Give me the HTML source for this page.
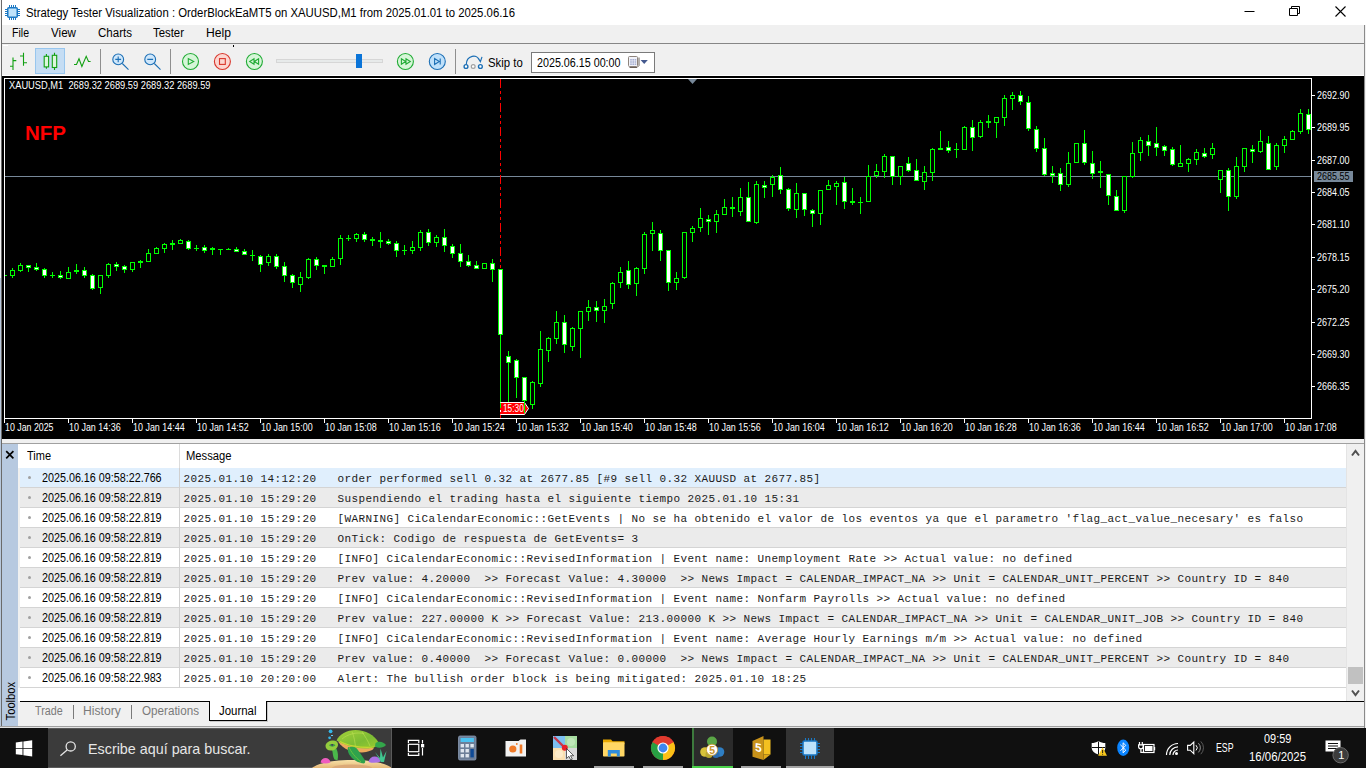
<!DOCTYPE html>
<html lang="en"><head><meta charset="utf-8"><title>Strategy Tester Visualization</title>
<style>
html,body{margin:0;padding:0}
body{width:1366px;height:768px;position:relative;overflow:hidden;background:#f0f0f0;font-family:"Liberation Sans",sans-serif}
.r{position:absolute;display:block}
.t{position:absolute;white-space:pre;line-height:1;transform-origin:0 50%;color:#000}
.m{font-family:"Liberation Mono",monospace;color:#1a1a1a}
</style></head><body>
<div class="r" style="left:0px;top:0px;width:1366px;height:25px;background:#fff;"></div>
<div class="r" style="left:0px;top:25px;width:1366px;height:18px;background:#f0f0f0;"></div>
<div class="r" style="left:0px;top:43px;width:1366px;height:1px;background:#868686;"></div>
<div class="r" style="left:0px;top:44px;width:1366px;height:32px;background:#f0f0f0;"></div>
<div class="r" style="left:2px;top:75px;width:1362px;height:1px;background:#fff;"></div>
<div class="r" style="left:3px;top:45px;width:5px;height:1px;background:#fff;"></div>
<svg class="r" style="left:4px;top:4px" width="17" height="17" viewBox="0 0 17 17">
<g stroke="#1b78c4" stroke-width="1" fill="none">
<path d="M5.5 1v3M7.5 1v3M9.5 1v3M11.5 1v3M5.5 13v3M7.5 13v3M9.5 13v3M11.5 13v3M1 5.5h3M1 7.5h3M1 9.5h3M1 11.5h3M13 5.5h3M13 7.5h3M13 9.5h3M13 11.5h3"/>
</g><rect x="3.75" y="3.75" width="9.5" height="9.5" rx="1" fill="#bfe3fb" stroke="#1b78c4" stroke-width="1.5"/></svg>
<span class="t" style="left:26.00px;top:6.84px;font-size:12px;transform:scaleX(0.9455);">Strategy Tester Visualization : OrderBlockEaMT5 on XAUUSD,M1 from 2025.01.01 to 2025.06.16</span>
<svg class="r" style="left:1230px;top:0" width="136" height="25" viewBox="0 0 136 25" fill="none" stroke="#000" stroke-width="1">
<path d="M14.5 11.5h10"/>
<path d="M59.5 8.5h8v7h-8z M61.5 8.5v-2h8v7h-2"/>
<path d="M105.5 6.5l10 10M115.5 6.5l-10 10" stroke-width="1.1"/></svg>
<span class="t" style="left:11.50px;top:26.84px;font-size:12px;transform:scaleX(0.8788);">File</span>
<span class="t" style="left:51.00px;top:26.84px;font-size:12px;transform:scaleX(0.9691);">View</span>
<span class="t" style="left:98.00px;top:26.84px;font-size:12px;transform:scaleX(0.9620);">Charts</span>
<span class="t" style="left:153.00px;top:26.84px;font-size:12px;transform:scaleX(0.9484);">Tester</span>
<span class="t" style="left:206.00px;top:26.84px;font-size:12px;transform:scaleX(1.0127);">Help</span>
<div class="r" style="left:0px;top:0px;width:1px;height:278px;background:#f6f6f6;"></div>
<div class="r" style="left:0px;top:278px;width:1px;height:449px;background:#b8c8dc;"></div>
<div class="r" style="left:1px;top:0px;width:1px;height:727px;background:#6a6a6a;"></div>
<div class="r" style="left:35px;top:48px;width:30px;height:26px;background:#c5ddf4;box-sizing:border-box;border:1px solid #98c6ee;"></div>
<svg class="r" style="left:0;top:44px" width="700" height="32" viewBox="0 44 700 32" fill="none">
<g stroke="#12a012" stroke-width="1.1">
<path d="M13 57.5V70M10 66.2h3M13 60.6h3.3M23.5 52.7V65.7M20 56h3.5M23.5 62.8H27"/>
<path d="M46.4 54v2.3M46.4 67v1.8M54.5 52.7v2.6M54.5 67.5V70"/>
<rect x="44.2" y="56.3" width="4.4" height="10.6" fill="#dcf7dc"/>
<rect x="52.3" y="55.3" width="4.4" height="12.2" fill="#dcf7dc"/>
<path d="M74 64.5h2.5l2.5-5.7 2.9 7.7 4.3-10.2 2.3 5.2h2.1"/>
</g>
<path d="M100.5 49v25M170.5 49v25M455.5 49v25" stroke="#8e8e8e" stroke-width="1"/>
<g stroke="#1c6fb5" stroke-width="1.1">
<circle cx="118.2" cy="59.4" r="5.4" fill="#cfe7fb"/><path d="M122.3 63.5l6.2 6.2M115.3 59.4h5.8M118.2 56.5v5.8"/>
<circle cx="150.2" cy="59.4" r="5.4" fill="#cfe7fb"/><path d="M154.3 63.5l6.2 6.2M147.3 59.4h5.8"/>
</g>
<g stroke="#21ab35" stroke-width="1.1">
<circle cx="190.5" cy="61.5" r="8" fill="#d6f6d8"/><path d="M188.3 58.6v5.8l5.4-2.9z"/>
<circle cx="254.4" cy="61.5" r="8" fill="#d6f6d8"/><path d="M254 58.8v5.4l-4.3-2.7zM258.6 58.8v5.4l-4.3-2.7z"/>
<circle cx="405.4" cy="61.5" r="8" fill="#d6f6d8"/><path d="M401.4 58.8v5.4l4.3-2.7zM406 58.8v5.4l4.3-2.7z"/>
</g>
<g stroke="#d9362b" stroke-width="1.1"><circle cx="222.4" cy="61.5" r="8" fill="#fbd6d1"/><rect x="219.5" y="58.6" width="5.8" height="5.8"/></g>
<g stroke="#1c6fb5" stroke-width="1.1"><circle cx="437.3" cy="61.5" r="8" fill="#bfe0fa"/><path d="M434.6 58.6v5.8l4.7-2.9zM440.2 58.4v6.2"/></g>
<rect x="233" y="45" width="1" height="2" fill="#000"/>
<rect x="276.5" y="59.5" width="106" height="3" fill="#e7eaea" stroke="#d6d6d6"/>
<rect x="356" y="54" width="6" height="14" fill="#0a74d8"/>
<g stroke="#1c6fb5" stroke-width="1.2">
<path d="M466.3 64.6c0-9 11-12 13.8-3.2M477.6 57.5l2.8 4.2 1.6-4.8"/>
<circle cx="466" cy="66.5" r="1.9" fill="#fff" stroke-width="1.4"/><circle cx="480.4" cy="66.5" r="1.9" fill="#fff" stroke-width="1.4"/>
<circle cx="473.2" cy="66.5" r="1.9" fill="#fff" stroke="#a0a0a0"/></g>
<rect x="531.5" y="52.5" width="123" height="20" fill="#fff" stroke="#7a7a7a"/>
<path d="M629.500 67.500h7.500l2-2v-8" stroke="#6b6058" stroke-width="1" fill="none"/>
<rect x="628.500" y="56.500" width="9" height="10" rx="1" fill="#f2f3fa" stroke="#8e847c"/>
<g fill="#a9b1d3"><rect x="630.200" y="59" width="1.600" height="1.600"/><rect x="632.400" y="59" width="1.600" height="1.600"/><rect x="634.600" y="59" width="1.600" height="1.600"/>
<rect x="630.200" y="61.200" width="1.600" height="1.600"/><rect x="632.400" y="61.200" width="1.600" height="1.600"/><rect x="634.600" y="61.200" width="1.600" height="1.600"/>
<rect x="630.200" y="63.400" width="1.600" height="1.600"/><rect x="632.400" y="63.400" width="1.600" height="1.600"/><rect x="634.600" y="63.400" width="1.600" height="1.600"/></g>
<path d="M640.6 60h7.2l-3.6 4z" fill="#44598f"/>
</svg>
<span class="t" style="left:487.50px;top:56.84px;font-size:12px;transform:scaleX(0.9458);">Skip to</span>
<span class="t" style="left:536.50px;top:56.84px;font-size:12px;transform:scaleX(0.8938);">2025.06.15 00:00</span>
<div class="r" style="left:2px;top:76px;width:1362px;height:363px;background:#000;"></div>
<svg class="r" style="left:0;top:76px" width="1366" height="363" viewBox="0 76 1366 363" shape-rendering="crispEdges"><path d="M4.5 78.5H1311.5V418.5H4.5z" fill="none" stroke="#fff" stroke-width="1"/><rect x="5" y="176" width="1306" height="1" fill="#778899"/><rect x="4" y="419" width="1" height="4" fill="#fff"/><rect x="68" y="419" width="1" height="4" fill="#fff"/><rect x="132" y="419" width="1" height="4" fill="#fff"/><rect x="196" y="419" width="1" height="4" fill="#fff"/><rect x="260" y="419" width="1" height="4" fill="#fff"/><rect x="324" y="419" width="1" height="4" fill="#fff"/><rect x="388" y="419" width="1" height="4" fill="#fff"/><rect x="452" y="419" width="1" height="4" fill="#fff"/><rect x="516" y="419" width="1" height="4" fill="#fff"/><rect x="580" y="419" width="1" height="4" fill="#fff"/><rect x="644" y="419" width="1" height="4" fill="#fff"/><rect x="708" y="419" width="1" height="4" fill="#fff"/><rect x="772" y="419" width="1" height="4" fill="#fff"/><rect x="836" y="419" width="1" height="4" fill="#fff"/><rect x="900" y="419" width="1" height="4" fill="#fff"/><rect x="964" y="419" width="1" height="4" fill="#fff"/><rect x="1028" y="419" width="1" height="4" fill="#fff"/><rect x="1092" y="419" width="1" height="4" fill="#fff"/><rect x="1156" y="419" width="1" height="4" fill="#fff"/><rect x="1220" y="419" width="1" height="4" fill="#fff"/><rect x="1284" y="419" width="1" height="4" fill="#fff"/><rect x="1312" y="95" width="3" height="1" fill="#fff"/><rect x="1312" y="127" width="3" height="1" fill="#fff"/><rect x="1312" y="160" width="3" height="1" fill="#fff"/><rect x="1312" y="192" width="3" height="1" fill="#fff"/><rect x="1312" y="224" width="3" height="1" fill="#fff"/><rect x="1312" y="257" width="3" height="1" fill="#fff"/><rect x="1312" y="289" width="3" height="1" fill="#fff"/><rect x="1312" y="322" width="3" height="1" fill="#fff"/><rect x="1312" y="354" width="3" height="1" fill="#fff"/><rect x="1312" y="386" width="3" height="1" fill="#fff"/><rect x="500" y="79" width="1" height="9" fill="#f00"/><rect x="500" y="91" width="1" height="3" fill="#f00"/><rect x="500" y="97" width="1" height="3" fill="#f00"/><rect x="500" y="103" width="1" height="9" fill="#f00"/><rect x="500" y="115" width="1" height="3" fill="#f00"/><rect x="500" y="121" width="1" height="3" fill="#f00"/><rect x="500" y="127" width="1" height="9" fill="#f00"/><rect x="500" y="139" width="1" height="3" fill="#f00"/><rect x="500" y="145" width="1" height="3" fill="#f00"/><rect x="500" y="151" width="1" height="9" fill="#f00"/><rect x="500" y="163" width="1" height="3" fill="#f00"/><rect x="500" y="169" width="1" height="3" fill="#f00"/><rect x="500" y="175" width="1" height="9" fill="#f00"/><rect x="500" y="187" width="1" height="3" fill="#f00"/><rect x="500" y="193" width="1" height="3" fill="#f00"/><rect x="500" y="199" width="1" height="9" fill="#f00"/><rect x="500" y="211" width="1" height="3" fill="#f00"/><rect x="500" y="217" width="1" height="3" fill="#f00"/><rect x="500" y="223" width="1" height="9" fill="#f00"/><rect x="500" y="235" width="1" height="3" fill="#f00"/><rect x="500" y="241" width="1" height="3" fill="#f00"/><rect x="500" y="247" width="1" height="9" fill="#f00"/><rect x="500" y="259" width="1" height="3" fill="#f00"/><rect x="500" y="265" width="1" height="3" fill="#f00"/><path d="M688 79h9l-4.500 5z" fill="#778899" shape-rendering="auto"/><rect x="5" y="275" width="2" height="1" fill="#00ff00"/><rect x="12" y="268" width="1" height="2" fill="#00ff00"/><rect x="12" y="276" width="1" height="2" fill="#00ff00"/><rect x="10.5" y="270.5" width="4" height="5" fill="#000" stroke="#00ff00"/><rect x="20" y="263" width="1" height="2" fill="#00ff00"/><rect x="20" y="271" width="1" height="1" fill="#00ff00"/><rect x="18.5" y="265.5" width="4" height="5" fill="#000" stroke="#00ff00"/><rect x="28" y="265" width="1" height="7" fill="#00ff00"/><rect x="26.5" y="265.5" width="4" height="2" fill="#fff" stroke="#00ff00"/><rect x="36" y="263" width="1" height="8" fill="#00ff00"/><rect x="34.5" y="267.5" width="4" height="2" fill="#fff" stroke="#00ff00"/><rect x="44" y="268" width="1" height="10" fill="#00ff00"/><rect x="42.5" y="269.5" width="4" height="6" fill="#fff" stroke="#00ff00"/><rect x="52" y="272" width="1" height="6" fill="#00ff00"/><rect x="50" y="275" width="5" height="1" fill="#00ff00"/><rect x="60" y="271" width="1" height="8" fill="#00ff00"/><rect x="58.5" y="275.5" width="4" height="2" fill="#fff" stroke="#00ff00"/><rect x="68" y="267" width="1" height="5" fill="#00ff00"/><rect x="66.5" y="272.5" width="4" height="6" fill="#000" stroke="#00ff00"/><rect x="76" y="264" width="1" height="10" fill="#00ff00"/><rect x="74" y="270" width="5" height="2" fill="#00ff00"/><rect x="84" y="267" width="1" height="11" fill="#00ff00"/><rect x="82.5" y="270.5" width="4" height="5" fill="#fff" stroke="#00ff00"/><rect x="92" y="274" width="1" height="16" fill="#00ff00"/><rect x="90.5" y="275.5" width="4" height="13" fill="#fff" stroke="#00ff00"/><rect x="100" y="288" width="1" height="6" fill="#00ff00"/><rect x="98.5" y="275.5" width="4" height="12" fill="#000" stroke="#00ff00"/><rect x="108" y="263" width="1" height="1" fill="#00ff00"/><rect x="108" y="276" width="1" height="2" fill="#00ff00"/><rect x="106.5" y="264.5" width="4" height="11" fill="#000" stroke="#00ff00"/><rect x="116" y="262" width="1" height="9" fill="#00ff00"/><rect x="114.5" y="264.5" width="4" height="2" fill="#fff" stroke="#00ff00"/><rect x="124" y="265" width="1" height="8" fill="#00ff00"/><rect x="122.5" y="266.5" width="4" height="3" fill="#fff" stroke="#00ff00"/><rect x="132" y="270" width="1" height="2" fill="#00ff00"/><rect x="130.5" y="262.5" width="4" height="7" fill="#000" stroke="#00ff00"/><rect x="140" y="260" width="1" height="8" fill="#00ff00"/><rect x="138" y="261" width="5" height="2" fill="#00ff00"/><rect x="148" y="249" width="1" height="4" fill="#00ff00"/><rect x="146.5" y="253.5" width="4" height="8" fill="#000" stroke="#00ff00"/><rect x="156" y="247" width="1" height="1" fill="#00ff00"/><rect x="154.5" y="248.5" width="4" height="5" fill="#000" stroke="#00ff00"/><rect x="164" y="243" width="1" height="1" fill="#00ff00"/><rect x="164" y="249" width="1" height="4" fill="#00ff00"/><rect x="162.5" y="244.5" width="4" height="4" fill="#000" stroke="#00ff00"/><rect x="172" y="240" width="1" height="10" fill="#00ff00"/><rect x="170" y="243" width="5" height="2" fill="#00ff00"/><rect x="180" y="239" width="1" height="1" fill="#00ff00"/><rect x="178.5" y="240.5" width="4" height="3" fill="#000" stroke="#00ff00"/><rect x="188" y="240" width="1" height="10" fill="#00ff00"/><rect x="186.5" y="241.5" width="4" height="7" fill="#fff" stroke="#00ff00"/><rect x="196" y="245" width="1" height="6" fill="#00ff00"/><rect x="194" y="248" width="5" height="1" fill="#00ff00"/><rect x="204" y="245" width="1" height="8" fill="#00ff00"/><rect x="202.5" y="247.5" width="4" height="3" fill="#fff" stroke="#00ff00"/><rect x="212" y="247" width="1" height="8" fill="#00ff00"/><rect x="210" y="248" width="5" height="2" fill="#00ff00"/><rect x="220" y="249" width="1" height="6" fill="#00ff00"/><rect x="218" y="249" width="5" height="1" fill="#00ff00"/><rect x="228" y="248" width="1" height="2" fill="#00ff00"/><rect x="226" y="249" width="5" height="1" fill="#00ff00"/><rect x="236" y="247" width="1" height="5" fill="#00ff00"/><rect x="234.5" y="249.5" width="4" height="2" fill="#fff" stroke="#00ff00"/><rect x="244" y="249" width="1" height="6" fill="#00ff00"/><rect x="242.5" y="251.5" width="4" height="3" fill="#fff" stroke="#00ff00"/><rect x="252" y="250" width="1" height="11" fill="#00ff00"/><rect x="250" y="255" width="5" height="1" fill="#00ff00"/><rect x="260" y="255" width="1" height="17" fill="#00ff00"/><rect x="258.5" y="256.5" width="4" height="8" fill="#fff" stroke="#00ff00"/><rect x="268" y="254" width="1" height="2" fill="#00ff00"/><rect x="268" y="263" width="1" height="3" fill="#00ff00"/><rect x="266.5" y="256.5" width="4" height="6" fill="#000" stroke="#00ff00"/><rect x="276" y="254" width="1" height="15" fill="#00ff00"/><rect x="274.5" y="256.5" width="4" height="10" fill="#fff" stroke="#00ff00"/><rect x="284" y="262" width="1" height="20" fill="#00ff00"/><rect x="282.5" y="266.5" width="4" height="9" fill="#fff" stroke="#00ff00"/><rect x="292" y="274" width="1" height="14" fill="#00ff00"/><rect x="290.5" y="275.5" width="4" height="7" fill="#fff" stroke="#00ff00"/><rect x="300" y="272" width="1" height="5" fill="#00ff00"/><rect x="300" y="285" width="1" height="7" fill="#00ff00"/><rect x="298.5" y="277.5" width="4" height="7" fill="#000" stroke="#00ff00"/><rect x="308" y="258" width="1" height="1" fill="#00ff00"/><rect x="308" y="278" width="1" height="1" fill="#00ff00"/><rect x="306.5" y="259.5" width="4" height="18" fill="#000" stroke="#00ff00"/><rect x="316" y="257" width="1" height="13" fill="#00ff00"/><rect x="314.5" y="259.5" width="4" height="6" fill="#fff" stroke="#00ff00"/><rect x="324" y="265" width="1" height="9" fill="#00ff00"/><rect x="322" y="265" width="5" height="2" fill="#00ff00"/><rect x="332" y="257" width="1" height="2" fill="#00ff00"/><rect x="330.5" y="259.5" width="4" height="7" fill="#000" stroke="#00ff00"/><rect x="340" y="235" width="1" height="3" fill="#00ff00"/><rect x="340" y="259" width="1" height="6" fill="#00ff00"/><rect x="338.5" y="238.5" width="4" height="20" fill="#000" stroke="#00ff00"/><rect x="348" y="235" width="1" height="6" fill="#00ff00"/><rect x="346" y="238" width="5" height="1" fill="#00ff00"/><rect x="356" y="233" width="1" height="1" fill="#00ff00"/><rect x="356" y="239" width="1" height="3" fill="#00ff00"/><rect x="354.5" y="234.5" width="4" height="4" fill="#000" stroke="#00ff00"/><rect x="364" y="232" width="1" height="10" fill="#00ff00"/><rect x="362.5" y="234.5" width="4" height="5" fill="#fff" stroke="#00ff00"/><rect x="372" y="237" width="1" height="9" fill="#00ff00"/><rect x="370" y="239" width="5" height="2" fill="#00ff00"/><rect x="380" y="232" width="1" height="16" fill="#00ff00"/><rect x="378" y="240" width="5" height="2" fill="#00ff00"/><rect x="388" y="239" width="1" height="6" fill="#00ff00"/><rect x="386.5" y="241.5" width="4" height="2" fill="#fff" stroke="#00ff00"/><rect x="396" y="241" width="1" height="16" fill="#00ff00"/><rect x="394.5" y="243.5" width="4" height="7" fill="#fff" stroke="#00ff00"/><rect x="404" y="245" width="1" height="10" fill="#00ff00"/><rect x="402" y="250" width="5" height="1" fill="#00ff00"/><rect x="412" y="241" width="1" height="6" fill="#00ff00"/><rect x="412" y="251" width="1" height="3" fill="#00ff00"/><rect x="410.5" y="247.5" width="4" height="3" fill="#000" stroke="#00ff00"/><rect x="420" y="230" width="1" height="2" fill="#00ff00"/><rect x="420" y="248" width="1" height="3" fill="#00ff00"/><rect x="418.5" y="232.5" width="4" height="15" fill="#000" stroke="#00ff00"/><rect x="428" y="229" width="1" height="17" fill="#00ff00"/><rect x="426.5" y="232.5" width="4" height="10" fill="#fff" stroke="#00ff00"/><rect x="436" y="235" width="1" height="2" fill="#00ff00"/><rect x="436" y="243" width="1" height="4" fill="#00ff00"/><rect x="434.5" y="237.5" width="4" height="5" fill="#000" stroke="#00ff00"/><rect x="444" y="229" width="1" height="23" fill="#00ff00"/><rect x="442.5" y="237.5" width="4" height="8" fill="#fff" stroke="#00ff00"/><rect x="452" y="244" width="1" height="14" fill="#00ff00"/><rect x="450.5" y="246.5" width="4" height="7" fill="#fff" stroke="#00ff00"/><rect x="460" y="244" width="1" height="23" fill="#00ff00"/><rect x="458.5" y="253.5" width="4" height="8" fill="#fff" stroke="#00ff00"/><rect x="468" y="255" width="1" height="12" fill="#00ff00"/><rect x="466.5" y="261.5" width="4" height="4" fill="#fff" stroke="#00ff00"/><rect x="476" y="261" width="1" height="8" fill="#00ff00"/><rect x="474.5" y="265.5" width="4" height="3" fill="#fff" stroke="#00ff00"/><rect x="482.5" y="263.5" width="4" height="5" fill="#000" stroke="#00ff00"/><rect x="492" y="259" width="1" height="23" fill="#00ff00"/><rect x="490.5" y="263.5" width="4" height="6" fill="#fff" stroke="#00ff00"/><rect x="500" y="269" width="1" height="140" fill="#00ff00"/><rect x="498.5" y="269.5" width="4" height="65" fill="#fff" stroke="#00ff00"/><rect x="508" y="351" width="1" height="52" fill="#00ff00"/><rect x="506.5" y="356.5" width="4" height="6" fill="#fff" stroke="#00ff00"/><rect x="516" y="359" width="1" height="39" fill="#00ff00"/><rect x="514.5" y="360.5" width="4" height="17" fill="#fff" stroke="#00ff00"/><rect x="524" y="377" width="1" height="36" fill="#00ff00"/><rect x="522.5" y="377.5" width="4" height="23" fill="#fff" stroke="#00ff00"/><rect x="532" y="381" width="1" height="1" fill="#00ff00"/><rect x="532" y="405" width="1" height="4" fill="#00ff00"/><rect x="530.5" y="382.5" width="4" height="22" fill="#000" stroke="#00ff00"/><rect x="540" y="331" width="1" height="18" fill="#00ff00"/><rect x="540" y="384" width="1" height="3" fill="#00ff00"/><rect x="538.5" y="349.5" width="4" height="34" fill="#000" stroke="#00ff00"/><rect x="548" y="337" width="1" height="1" fill="#00ff00"/><rect x="548" y="351" width="1" height="11" fill="#00ff00"/><rect x="546.5" y="338.5" width="4" height="12" fill="#000" stroke="#00ff00"/><rect x="556" y="311" width="1" height="11" fill="#00ff00"/><rect x="556" y="339" width="1" height="5" fill="#00ff00"/><rect x="554.5" y="322.5" width="4" height="16" fill="#000" stroke="#00ff00"/><rect x="564" y="315" width="1" height="38" fill="#00ff00"/><rect x="562.5" y="322.5" width="4" height="22" fill="#fff" stroke="#00ff00"/><rect x="572" y="327" width="1" height="1" fill="#00ff00"/><rect x="572" y="347" width="1" height="4" fill="#00ff00"/><rect x="570.5" y="328.5" width="4" height="18" fill="#000" stroke="#00ff00"/><rect x="580" y="329" width="1" height="29" fill="#00ff00"/><rect x="578.5" y="311.5" width="4" height="17" fill="#000" stroke="#00ff00"/><rect x="588" y="300" width="1" height="7" fill="#00ff00"/><rect x="588" y="312" width="1" height="9" fill="#00ff00"/><rect x="586.5" y="307.5" width="4" height="4" fill="#000" stroke="#00ff00"/><rect x="596" y="301" width="1" height="21" fill="#00ff00"/><rect x="594.5" y="307.5" width="4" height="3" fill="#fff" stroke="#00ff00"/><rect x="604" y="299" width="1" height="7" fill="#00ff00"/><rect x="604" y="311" width="1" height="12" fill="#00ff00"/><rect x="602.5" y="306.5" width="4" height="4" fill="#000" stroke="#00ff00"/><rect x="612" y="282" width="1" height="1" fill="#00ff00"/><rect x="612" y="304" width="1" height="5" fill="#00ff00"/><rect x="610.5" y="283.5" width="4" height="20" fill="#000" stroke="#00ff00"/><rect x="620" y="267" width="1" height="5" fill="#00ff00"/><rect x="620" y="283" width="1" height="5" fill="#00ff00"/><rect x="618.5" y="272.5" width="4" height="10" fill="#000" stroke="#00ff00"/><rect x="628" y="261" width="1" height="28" fill="#00ff00"/><rect x="626.5" y="270.5" width="4" height="14" fill="#fff" stroke="#00ff00"/><rect x="636" y="267" width="1" height="1" fill="#00ff00"/><rect x="636" y="284" width="1" height="12" fill="#00ff00"/><rect x="634.5" y="268.5" width="4" height="15" fill="#000" stroke="#00ff00"/><rect x="644" y="232" width="1" height="2" fill="#00ff00"/><rect x="644" y="269" width="1" height="5" fill="#00ff00"/><rect x="642.5" y="234.5" width="4" height="34" fill="#000" stroke="#00ff00"/><rect x="652" y="222" width="1" height="8" fill="#00ff00"/><rect x="652" y="234" width="1" height="17" fill="#00ff00"/><rect x="650.5" y="230.5" width="4" height="3" fill="#000" stroke="#00ff00"/><rect x="660" y="230" width="1" height="31" fill="#00ff00"/><rect x="658.5" y="233.5" width="4" height="17" fill="#fff" stroke="#00ff00"/><rect x="668" y="250" width="1" height="41" fill="#00ff00"/><rect x="666.5" y="250.5" width="4" height="32" fill="#fff" stroke="#00ff00"/><rect x="676" y="272" width="1" height="6" fill="#00ff00"/><rect x="676" y="283" width="1" height="7" fill="#00ff00"/><rect x="674.5" y="278.5" width="4" height="4" fill="#000" stroke="#00ff00"/><rect x="684" y="278" width="1" height="1" fill="#00ff00"/><rect x="682.5" y="232.5" width="4" height="45" fill="#000" stroke="#00ff00"/><rect x="692" y="226" width="1" height="2" fill="#00ff00"/><rect x="692" y="233" width="1" height="9" fill="#00ff00"/><rect x="690.5" y="228.5" width="4" height="4" fill="#000" stroke="#00ff00"/><rect x="700" y="208" width="1" height="10" fill="#00ff00"/><rect x="700" y="228" width="1" height="4" fill="#00ff00"/><rect x="698.5" y="218.5" width="4" height="9" fill="#000" stroke="#00ff00"/><rect x="708" y="215" width="1" height="20" fill="#00ff00"/><rect x="706.5" y="219.5" width="4" height="2" fill="#fff" stroke="#00ff00"/><rect x="716" y="210" width="1" height="4" fill="#00ff00"/><rect x="716" y="222" width="1" height="11" fill="#00ff00"/><rect x="714.5" y="214.5" width="4" height="7" fill="#000" stroke="#00ff00"/><rect x="724" y="199" width="1" height="8" fill="#00ff00"/><rect x="722.5" y="207.5" width="4" height="7" fill="#000" stroke="#00ff00"/><rect x="732" y="197" width="1" height="20" fill="#00ff00"/><rect x="730" y="207" width="5" height="2" fill="#00ff00"/><rect x="740" y="188" width="1" height="9" fill="#00ff00"/><rect x="740" y="212" width="1" height="4" fill="#00ff00"/><rect x="738.5" y="197.5" width="4" height="14" fill="#000" stroke="#00ff00"/><rect x="748" y="182" width="1" height="40" fill="#00ff00"/><rect x="746.5" y="197.5" width="4" height="24" fill="#fff" stroke="#00ff00"/><rect x="756" y="181" width="1" height="3" fill="#00ff00"/><rect x="756" y="223" width="1" height="1" fill="#00ff00"/><rect x="754.5" y="184.5" width="4" height="38" fill="#000" stroke="#00ff00"/><rect x="764" y="181" width="1" height="17" fill="#00ff00"/><rect x="762.5" y="185.5" width="4" height="2" fill="#fff" stroke="#00ff00"/><rect x="772" y="175" width="1" height="2" fill="#00ff00"/><rect x="772" y="185" width="1" height="12" fill="#00ff00"/><rect x="770.5" y="177.5" width="4" height="7" fill="#000" stroke="#00ff00"/><rect x="780" y="167" width="1" height="27" fill="#00ff00"/><rect x="778.5" y="175.5" width="4" height="14" fill="#fff" stroke="#00ff00"/><rect x="788" y="188" width="1" height="23" fill="#00ff00"/><rect x="786.5" y="189.5" width="4" height="19" fill="#fff" stroke="#00ff00"/><rect x="796" y="183" width="1" height="10" fill="#00ff00"/><rect x="796" y="210" width="1" height="8" fill="#00ff00"/><rect x="794.5" y="193.5" width="4" height="16" fill="#000" stroke="#00ff00"/><rect x="804" y="193" width="1" height="23" fill="#00ff00"/><rect x="802.5" y="193.5" width="4" height="16" fill="#fff" stroke="#00ff00"/><rect x="812" y="209" width="1" height="18" fill="#00ff00"/><rect x="810.5" y="210.5" width="4" height="3" fill="#fff" stroke="#00ff00"/><rect x="820" y="214" width="1" height="11" fill="#00ff00"/><rect x="818.5" y="190.5" width="4" height="23" fill="#000" stroke="#00ff00"/><rect x="828" y="180" width="1" height="5" fill="#00ff00"/><rect x="826.5" y="185.5" width="4" height="4" fill="#000" stroke="#00ff00"/><rect x="836" y="181" width="1" height="2" fill="#00ff00"/><rect x="836" y="187" width="1" height="18" fill="#00ff00"/><rect x="834.5" y="183.5" width="4" height="3" fill="#000" stroke="#00ff00"/><rect x="844" y="177" width="1" height="32" fill="#00ff00"/><rect x="842.5" y="182.5" width="4" height="19" fill="#fff" stroke="#00ff00"/><rect x="852" y="188" width="1" height="17" fill="#00ff00"/><rect x="850" y="201" width="5" height="2" fill="#00ff00"/><rect x="860" y="197" width="1" height="17" fill="#00ff00"/><rect x="858" y="202" width="5" height="1" fill="#00ff00"/><rect x="868" y="165" width="1" height="11" fill="#00ff00"/><rect x="866.5" y="176.5" width="4" height="25" fill="#000" stroke="#00ff00"/><rect x="876" y="164" width="1" height="7" fill="#00ff00"/><rect x="876" y="176" width="1" height="2" fill="#00ff00"/><rect x="874.5" y="171.5" width="4" height="4" fill="#000" stroke="#00ff00"/><rect x="884" y="154" width="1" height="2" fill="#00ff00"/><rect x="884" y="172" width="1" height="6" fill="#00ff00"/><rect x="882.5" y="156.5" width="4" height="15" fill="#000" stroke="#00ff00"/><rect x="892" y="156" width="1" height="29" fill="#00ff00"/><rect x="890.5" y="156.5" width="4" height="20" fill="#fff" stroke="#00ff00"/><rect x="900" y="177" width="1" height="8" fill="#00ff00"/><rect x="898.5" y="166.5" width="4" height="10" fill="#000" stroke="#00ff00"/><rect x="908" y="157" width="1" height="15" fill="#00ff00"/><rect x="906.5" y="163.5" width="4" height="7" fill="#fff" stroke="#00ff00"/><rect x="916" y="159" width="1" height="22" fill="#00ff00"/><rect x="914.5" y="170.5" width="4" height="10" fill="#fff" stroke="#00ff00"/><rect x="924" y="166" width="1" height="6" fill="#00ff00"/><rect x="924" y="182" width="1" height="8" fill="#00ff00"/><rect x="922.5" y="172.5" width="4" height="9" fill="#000" stroke="#00ff00"/><rect x="932" y="148" width="1" height="1" fill="#00ff00"/><rect x="932" y="173" width="1" height="8" fill="#00ff00"/><rect x="930.5" y="149.5" width="4" height="23" fill="#000" stroke="#00ff00"/><rect x="940" y="131" width="1" height="19" fill="#00ff00"/><rect x="938" y="148" width="5" height="2" fill="#00ff00"/><rect x="948" y="141" width="1" height="12" fill="#00ff00"/><rect x="946.5" y="147.5" width="4" height="3" fill="#fff" stroke="#00ff00"/><rect x="956" y="143" width="1" height="15" fill="#00ff00"/><rect x="954" y="149" width="5" height="1" fill="#00ff00"/><rect x="964" y="126" width="1" height="1" fill="#00ff00"/><rect x="962.5" y="127.5" width="4" height="22" fill="#000" stroke="#00ff00"/><rect x="972" y="120" width="1" height="31" fill="#00ff00"/><rect x="970.5" y="127.5" width="4" height="10" fill="#fff" stroke="#00ff00"/><rect x="980" y="120" width="1" height="2" fill="#00ff00"/><rect x="980" y="137" width="1" height="1" fill="#00ff00"/><rect x="978.5" y="122.5" width="4" height="14" fill="#000" stroke="#00ff00"/><rect x="988" y="115" width="1" height="13" fill="#00ff00"/><rect x="986" y="121" width="5" height="2" fill="#00ff00"/><rect x="996" y="123" width="1" height="15" fill="#00ff00"/><rect x="994.5" y="117.5" width="4" height="5" fill="#000" stroke="#00ff00"/><rect x="1004" y="95" width="1" height="3" fill="#00ff00"/><rect x="1004" y="118" width="1" height="8" fill="#00ff00"/><rect x="1002.5" y="98.5" width="4" height="19" fill="#000" stroke="#00ff00"/><rect x="1012" y="92" width="1" height="3" fill="#00ff00"/><rect x="1012" y="99" width="1" height="11" fill="#00ff00"/><rect x="1010.5" y="95.5" width="4" height="3" fill="#000" stroke="#00ff00"/><rect x="1020" y="91" width="1" height="14" fill="#00ff00"/><rect x="1018.5" y="95.5" width="4" height="6" fill="#fff" stroke="#00ff00"/><rect x="1028" y="96" width="1" height="35" fill="#00ff00"/><rect x="1026.5" y="102.5" width="4" height="26" fill="#fff" stroke="#00ff00"/><rect x="1036" y="126" width="1" height="26" fill="#00ff00"/><rect x="1034.5" y="129.5" width="4" height="19" fill="#fff" stroke="#00ff00"/><rect x="1044" y="138" width="1" height="38" fill="#00ff00"/><rect x="1042.5" y="148.5" width="4" height="26" fill="#fff" stroke="#00ff00"/><rect x="1052" y="166" width="1" height="17" fill="#00ff00"/><rect x="1050.5" y="173.5" width="4" height="2" fill="#fff" stroke="#00ff00"/><rect x="1060" y="168" width="1" height="23" fill="#00ff00"/><rect x="1058.5" y="173.5" width="4" height="11" fill="#fff" stroke="#00ff00"/><rect x="1068" y="152" width="1" height="11" fill="#00ff00"/><rect x="1068" y="185" width="1" height="2" fill="#00ff00"/><rect x="1066.5" y="163.5" width="4" height="21" fill="#000" stroke="#00ff00"/><rect x="1074.5" y="143.5" width="4" height="19" fill="#000" stroke="#00ff00"/><rect x="1084" y="130" width="1" height="35" fill="#00ff00"/><rect x="1082.5" y="143.5" width="4" height="19" fill="#fff" stroke="#00ff00"/><rect x="1092" y="151" width="1" height="28" fill="#00ff00"/><rect x="1090.5" y="163.5" width="4" height="10" fill="#fff" stroke="#00ff00"/><rect x="1100" y="161" width="1" height="27" fill="#00ff00"/><rect x="1098" y="171" width="5" height="2" fill="#00ff00"/><rect x="1108" y="174" width="1" height="31" fill="#00ff00"/><rect x="1106.5" y="174.5" width="4" height="21" fill="#fff" stroke="#00ff00"/><rect x="1116" y="190" width="1" height="21" fill="#00ff00"/><rect x="1114.5" y="196.5" width="4" height="14" fill="#fff" stroke="#00ff00"/><rect x="1124" y="211" width="1" height="2" fill="#00ff00"/><rect x="1122.5" y="176.5" width="4" height="34" fill="#000" stroke="#00ff00"/><rect x="1132" y="142" width="1" height="11" fill="#00ff00"/><rect x="1132" y="177" width="1" height="1" fill="#00ff00"/><rect x="1130.5" y="153.5" width="4" height="23" fill="#000" stroke="#00ff00"/><rect x="1140" y="137" width="1" height="3" fill="#00ff00"/><rect x="1140" y="153" width="1" height="8" fill="#00ff00"/><rect x="1138.5" y="140.5" width="4" height="12" fill="#000" stroke="#00ff00"/><rect x="1148" y="135" width="1" height="21" fill="#00ff00"/><rect x="1146.5" y="141.5" width="4" height="4" fill="#fff" stroke="#00ff00"/><rect x="1156" y="127" width="1" height="29" fill="#00ff00"/><rect x="1154.5" y="143.5" width="4" height="4" fill="#fff" stroke="#00ff00"/><rect x="1164" y="145" width="1" height="11" fill="#00ff00"/><rect x="1162.5" y="146.5" width="4" height="4" fill="#fff" stroke="#00ff00"/><rect x="1172" y="147" width="1" height="19" fill="#00ff00"/><rect x="1170.5" y="149.5" width="4" height="15" fill="#fff" stroke="#00ff00"/><rect x="1180" y="145" width="1" height="18" fill="#00ff00"/><rect x="1178.5" y="163.5" width="4" height="3" fill="#000" stroke="#00ff00"/><rect x="1188" y="158" width="1" height="1" fill="#00ff00"/><rect x="1188" y="164" width="1" height="8" fill="#00ff00"/><rect x="1186.5" y="159.5" width="4" height="4" fill="#000" stroke="#00ff00"/><rect x="1196" y="149" width="1" height="3" fill="#00ff00"/><rect x="1196" y="160" width="1" height="5" fill="#00ff00"/><rect x="1194.5" y="152.5" width="4" height="7" fill="#000" stroke="#00ff00"/><rect x="1204" y="148" width="1" height="10" fill="#00ff00"/><rect x="1202.5" y="153.5" width="4" height="3" fill="#fff" stroke="#00ff00"/><rect x="1212" y="143" width="1" height="5" fill="#00ff00"/><rect x="1212" y="155" width="1" height="4" fill="#00ff00"/><rect x="1210.5" y="148.5" width="4" height="6" fill="#000" stroke="#00ff00"/><rect x="1220" y="180" width="1" height="13" fill="#00ff00"/><rect x="1218.5" y="170.5" width="4" height="9" fill="#000" stroke="#00ff00"/><rect x="1228" y="168" width="1" height="43" fill="#00ff00"/><rect x="1226.5" y="170.5" width="4" height="26" fill="#fff" stroke="#00ff00"/><rect x="1236" y="157" width="1" height="9" fill="#00ff00"/><rect x="1236" y="197" width="1" height="2" fill="#00ff00"/><rect x="1234.5" y="166.5" width="4" height="30" fill="#000" stroke="#00ff00"/><rect x="1244" y="167" width="1" height="5" fill="#00ff00"/><rect x="1242.5" y="148.5" width="4" height="18" fill="#000" stroke="#00ff00"/><rect x="1252" y="145" width="1" height="18" fill="#00ff00"/><rect x="1250.5" y="149.5" width="4" height="2" fill="#fff" stroke="#00ff00"/><rect x="1260" y="130" width="1" height="11" fill="#00ff00"/><rect x="1260" y="152" width="1" height="1" fill="#00ff00"/><rect x="1258.5" y="141.5" width="4" height="10" fill="#000" stroke="#00ff00"/><rect x="1268" y="136" width="1" height="34" fill="#00ff00"/><rect x="1266.5" y="143.5" width="4" height="26" fill="#fff" stroke="#00ff00"/><rect x="1276" y="143" width="1" height="2" fill="#00ff00"/><rect x="1276" y="167" width="1" height="3" fill="#00ff00"/><rect x="1274.5" y="145.5" width="4" height="21" fill="#000" stroke="#00ff00"/><rect x="1284" y="136" width="1" height="3" fill="#00ff00"/><rect x="1284" y="146" width="1" height="7" fill="#00ff00"/><rect x="1282.5" y="139.5" width="4" height="6" fill="#000" stroke="#00ff00"/><rect x="1292" y="130" width="1" height="1" fill="#00ff00"/><rect x="1290.5" y="131.5" width="4" height="8" fill="#000" stroke="#00ff00"/><rect x="1300" y="109" width="1" height="4" fill="#00ff00"/><rect x="1300" y="132" width="1" height="2" fill="#00ff00"/><rect x="1298.5" y="113.5" width="4" height="18" fill="#000" stroke="#00ff00"/><rect x="1308" y="109" width="1" height="25" fill="#00ff00"/><rect x="1306.5" y="114.5" width="4" height="15" fill="#fff" stroke="#00ff00"/><rect x="500" y="415" width="1" height="3" fill="#f00"/><path d="M500.5 402.5H524.5L528.5 408.5L524.5 414.5H500.5z" fill="#f00" stroke="#fff" stroke-width="1" shape-rendering="auto"/><rect x="500" y="403" width="1" height="5" fill="#0f0"/><rect x="500" y="408" width="1" height="2" fill="#f00"/><rect x="500" y="412" width="1" height="2" fill="#f00"/><rect x="524" y="401" width="1" height="12" fill="#0f0"/><rect x="1314" y="171" width="39" height="11" fill="#778899"/></svg>
<span class="t" style="left:8.50px;top:80.53px;font-size:10px;color:#fff;transform:scaleX(0.9293);">XAUUSD,M1  2689.32 2689.59 2689.32 2689.59</span>
<span class="t" style="left:25.00px;top:122.95px;font-size:20.5px;color:#f00;font-weight:bold;transform:scaleX(1.0000);">NFP</span>
<span class="t" style="left:502.80px;top:403.54px;font-size:10px;color:#fff;transform:scaleX(0.8310);">15:30</span>
<span class="t" style="left:4.50px;top:422.54px;font-size:10px;color:#fff;transform:scaleX(0.8808);">10 Jan 2025</span>
<span class="t" style="left:68.50px;top:422.54px;font-size:10px;color:#fff;transform:scaleX(0.8940);">10 Jan 14:36</span>
<span class="t" style="left:132.50px;top:422.54px;font-size:10px;color:#fff;transform:scaleX(0.8940);">10 Jan 14:44</span>
<span class="t" style="left:196.50px;top:422.54px;font-size:10px;color:#fff;transform:scaleX(0.8940);">10 Jan 14:52</span>
<span class="t" style="left:260.50px;top:422.54px;font-size:10px;color:#fff;transform:scaleX(0.8940);">10 Jan 15:00</span>
<span class="t" style="left:324.50px;top:422.54px;font-size:10px;color:#fff;transform:scaleX(0.8940);">10 Jan 15:08</span>
<span class="t" style="left:388.50px;top:422.54px;font-size:10px;color:#fff;transform:scaleX(0.8940);">10 Jan 15:16</span>
<span class="t" style="left:452.50px;top:422.54px;font-size:10px;color:#fff;transform:scaleX(0.8940);">10 Jan 15:24</span>
<span class="t" style="left:516.50px;top:422.54px;font-size:10px;color:#fff;transform:scaleX(0.8940);">10 Jan 15:32</span>
<span class="t" style="left:580.50px;top:422.54px;font-size:10px;color:#fff;transform:scaleX(0.8940);">10 Jan 15:40</span>
<span class="t" style="left:644.50px;top:422.54px;font-size:10px;color:#fff;transform:scaleX(0.8940);">10 Jan 15:48</span>
<span class="t" style="left:708.50px;top:422.54px;font-size:10px;color:#fff;transform:scaleX(0.8940);">10 Jan 15:56</span>
<span class="t" style="left:772.50px;top:422.54px;font-size:10px;color:#fff;transform:scaleX(0.8940);">10 Jan 16:04</span>
<span class="t" style="left:836.50px;top:422.54px;font-size:10px;color:#fff;transform:scaleX(0.8940);">10 Jan 16:12</span>
<span class="t" style="left:900.50px;top:422.54px;font-size:10px;color:#fff;transform:scaleX(0.8940);">10 Jan 16:20</span>
<span class="t" style="left:964.50px;top:422.54px;font-size:10px;color:#fff;transform:scaleX(0.8940);">10 Jan 16:28</span>
<span class="t" style="left:1028.50px;top:422.54px;font-size:10px;color:#fff;transform:scaleX(0.8940);">10 Jan 16:36</span>
<span class="t" style="left:1092.50px;top:422.54px;font-size:10px;color:#fff;transform:scaleX(0.8940);">10 Jan 16:44</span>
<span class="t" style="left:1156.50px;top:422.54px;font-size:10px;color:#fff;transform:scaleX(0.8940);">10 Jan 16:52</span>
<span class="t" style="left:1220.50px;top:422.54px;font-size:10px;color:#fff;transform:scaleX(0.8940);">10 Jan 17:00</span>
<span class="t" style="left:1284.50px;top:422.54px;font-size:10px;color:#fff;transform:scaleX(0.8940);">10 Jan 17:08</span>
<span class="t" style="left:1316.70px;top:90.53px;font-size:10px;color:#fff;transform:scaleX(0.8989);">2692.90</span>
<span class="t" style="left:1316.70px;top:122.53px;font-size:10px;color:#fff;transform:scaleX(0.8989);">2689.95</span>
<span class="t" style="left:1316.70px;top:155.53px;font-size:10px;color:#fff;transform:scaleX(0.8989);">2687.00</span>
<span class="t" style="left:1316.70px;top:187.53px;font-size:10px;color:#fff;transform:scaleX(0.8989);">2684.05</span>
<span class="t" style="left:1316.70px;top:219.53px;font-size:10px;color:#fff;transform:scaleX(0.8989);">2681.10</span>
<span class="t" style="left:1316.70px;top:252.53px;font-size:10px;color:#fff;transform:scaleX(0.8989);">2678.15</span>
<span class="t" style="left:1316.70px;top:284.54px;font-size:10px;color:#fff;transform:scaleX(0.8989);">2675.20</span>
<span class="t" style="left:1316.70px;top:317.54px;font-size:10px;color:#fff;transform:scaleX(0.8989);">2672.25</span>
<span class="t" style="left:1316.70px;top:349.54px;font-size:10px;color:#fff;transform:scaleX(0.8989);">2669.30</span>
<span class="t" style="left:1316.70px;top:381.54px;font-size:10px;color:#fff;transform:scaleX(0.8989);">2666.35</span>
<span class="t" style="left:1316.70px;top:171.53px;font-size:10px;transform:scaleX(0.8989);">2685.55</span>
<div class="r" style="left:2px;top:439px;width:1362px;height:4px;background:#f0f0f0;"></div>
<div class="r" style="left:2px;top:443px;width:1362px;height:1px;background:#a0a0a0;"></div>
<div class="r" style="left:2px;top:444px;width:16px;height:282px;background:#b7c9e0;"></div>
<div class="r" style="left:18px;top:444px;width:1346px;height:24px;background:#fff;"></div>
<div class="r" style="left:179px;top:444px;width:1px;height:244px;background:#dcdcdc;"></div>
<div class="r" style="left:20px;top:468px;width:1327px;height:19px;background:#e0effd;"></div>
<div class="r" style="left:20px;top:487px;width:1327px;height:1px;background:#d4d4d4;"></div>
<div class="r" style="left:20px;top:488px;width:1327px;height:19px;background:#ebebeb;"></div>
<div class="r" style="left:20px;top:507px;width:1327px;height:1px;background:#d4d4d4;"></div>
<div class="r" style="left:20px;top:508px;width:1327px;height:19px;background:#fff;"></div>
<div class="r" style="left:20px;top:527px;width:1327px;height:1px;background:#d4d4d4;"></div>
<div class="r" style="left:20px;top:528px;width:1327px;height:19px;background:#ebebeb;"></div>
<div class="r" style="left:20px;top:547px;width:1327px;height:1px;background:#d4d4d4;"></div>
<div class="r" style="left:20px;top:548px;width:1327px;height:19px;background:#fff;"></div>
<div class="r" style="left:20px;top:567px;width:1327px;height:1px;background:#d4d4d4;"></div>
<div class="r" style="left:20px;top:568px;width:1327px;height:19px;background:#ebebeb;"></div>
<div class="r" style="left:20px;top:587px;width:1327px;height:1px;background:#d4d4d4;"></div>
<div class="r" style="left:20px;top:588px;width:1327px;height:19px;background:#fff;"></div>
<div class="r" style="left:20px;top:607px;width:1327px;height:1px;background:#d4d4d4;"></div>
<div class="r" style="left:20px;top:608px;width:1327px;height:19px;background:#ebebeb;"></div>
<div class="r" style="left:20px;top:627px;width:1327px;height:1px;background:#d4d4d4;"></div>
<div class="r" style="left:20px;top:628px;width:1327px;height:19px;background:#fff;"></div>
<div class="r" style="left:20px;top:647px;width:1327px;height:1px;background:#d4d4d4;"></div>
<div class="r" style="left:20px;top:648px;width:1327px;height:19px;background:#ebebeb;"></div>
<div class="r" style="left:20px;top:667px;width:1327px;height:1px;background:#d4d4d4;"></div>
<div class="r" style="left:20px;top:668px;width:1327px;height:19px;background:#fff;"></div>
<div class="r" style="left:20px;top:687px;width:1327px;height:1px;background:#d4d4d4;"></div>
<div class="r" style="left:179px;top:468px;width:1px;height:220px;background:#d0d0d0;"></div>
<div class="r" style="left:18px;top:688px;width:1329px;height:13px;background:#fff;"></div>
<div class="r" style="left:20px;top:701px;width:1344px;height:1px;background:#000;"></div>
<div class="r" style="left:18px;top:702px;width:1346px;height:24px;background:#f0f0f0;"></div>
<div class="r" style="left:0px;top:726px;width:1366px;height:1px;background:#a0a0a0;"></div>
<div class="r" style="left:0px;top:727px;width:1366px;height:1px;background:#e2e2e2;"></div>
<div class="r" style="left:1346px;top:444px;width:1px;height:257px;background:#e4e4e4;"></div>
<div class="r" style="left:1347px;top:444px;width:17px;height:257px;background:#f0f0f0;"></div>
<div class="r" style="left:1348px;top:667px;width:15px;height:17px;background:#c1c1c1;"></div>
<svg class="r" style="left:1347px;top:444px" width="17" height="257" viewBox="0 0 17 257" fill="none" stroke="#505050" stroke-width="2">
<path d="M5 11.500l3.500-4.500 3.500 4.500M5 246.500l3.500 4.500 3.500-4.500"/></svg>
<svg class="r" style="left:5px;top:450px" width="10" height="10" viewBox="0 0 10 10"><path d="M1.2 1.2l7.2 7.2M8.4 1.2l-7.2 7.2" stroke="#000" stroke-width="1.7"/></svg>
<span class="t" style="left:26.50px;top:449.84px;font-size:12px;transform:scaleX(0.9148);">Time</span>
<span class="t" style="left:186.30px;top:449.84px;font-size:12px;transform:scaleX(0.9342);">Message</span>
<div class="r" style="left:27.7px;top:475.7px;width:3.6px;height:3.6px;background:#a0a0a0;border-radius:50%;"></div>
<span class="t" style="left:41.50px;top:471.84px;font-size:12px;transform:scaleX(0.8961);">2025.06.16 09:58:22.766</span>
<span class="t m" style="left:183.50px;top:473.57px;font-size:11px;letter-spacing:0.3988px;white-space:pre;">2025.01.10 14:12:20   order performed sell 0.32 at 2677.85 [#9 sell 0.32 XAUUSD at 2677.85]</span>
<div class="r" style="left:27.7px;top:495.7px;width:3.6px;height:3.6px;background:#a0a0a0;border-radius:50%;"></div>
<span class="t" style="left:41.50px;top:491.84px;font-size:12px;transform:scaleX(0.8961);">2025.06.16 09:58:22.819</span>
<span class="t m" style="left:183.50px;top:493.57px;font-size:11px;letter-spacing:0.3988px;white-space:pre;">2025.01.10 15:29:20   Suspendiendo el trading hasta el siguiente tiempo 2025.01.10 15:31</span>
<div class="r" style="left:27.7px;top:515.7px;width:3.6px;height:3.6px;background:#a0a0a0;border-radius:50%;"></div>
<span class="t" style="left:41.50px;top:511.84px;font-size:12px;transform:scaleX(0.8961);">2025.06.16 09:58:22.819</span>
<span class="t m" style="left:183.50px;top:513.57px;font-size:11px;letter-spacing:0.3988px;white-space:pre;">2025.01.10 15:29:20   [WARNING] CiCalendarEconomic::GetEvents | No se ha obtenido el valor de los eventos ya que el parametro 'flag_act_value_necesary' es falso</span>
<div class="r" style="left:27.7px;top:535.7px;width:3.6px;height:3.6px;background:#a0a0a0;border-radius:50%;"></div>
<span class="t" style="left:41.50px;top:531.84px;font-size:12px;transform:scaleX(0.8961);">2025.06.16 09:58:22.819</span>
<span class="t m" style="left:183.50px;top:533.57px;font-size:11px;letter-spacing:0.3988px;white-space:pre;">2025.01.10 15:29:20   OnTick: Codigo de respuesta de GetEvents= 3</span>
<div class="r" style="left:27.7px;top:555.7px;width:3.6px;height:3.6px;background:#a0a0a0;border-radius:50%;"></div>
<span class="t" style="left:41.50px;top:551.84px;font-size:12px;transform:scaleX(0.8961);">2025.06.16 09:58:22.819</span>
<span class="t m" style="left:183.50px;top:553.57px;font-size:11px;letter-spacing:0.3988px;white-space:pre;">2025.01.10 15:29:20   [INFO] CiCalendarEconomic::RevisedInformation | Event name: Unemployment Rate &gt;&gt; Actual value: no defined</span>
<div class="r" style="left:27.7px;top:575.7px;width:3.6px;height:3.6px;background:#a0a0a0;border-radius:50%;"></div>
<span class="t" style="left:41.50px;top:571.84px;font-size:12px;transform:scaleX(0.8961);">2025.06.16 09:58:22.819</span>
<span class="t m" style="left:183.50px;top:573.57px;font-size:11px;letter-spacing:0.3988px;white-space:pre;">2025.01.10 15:29:20   Prev value: 4.20000  &gt;&gt; Forecast Value: 4.30000  &gt;&gt; News Impact = CALENDAR_IMPACT_NA &gt;&gt; Unit = CALENDAR_UNIT_PERCENT &gt;&gt; Country ID = 840</span>
<div class="r" style="left:27.7px;top:595.7px;width:3.6px;height:3.6px;background:#a0a0a0;border-radius:50%;"></div>
<span class="t" style="left:41.50px;top:591.84px;font-size:12px;transform:scaleX(0.8961);">2025.06.16 09:58:22.819</span>
<span class="t m" style="left:183.50px;top:593.57px;font-size:11px;letter-spacing:0.3988px;white-space:pre;">2025.01.10 15:29:20   [INFO] CiCalendarEconomic::RevisedInformation | Event name: Nonfarm Payrolls &gt;&gt; Actual value: no defined</span>
<div class="r" style="left:27.7px;top:615.7px;width:3.6px;height:3.6px;background:#a0a0a0;border-radius:50%;"></div>
<span class="t" style="left:41.50px;top:611.84px;font-size:12px;transform:scaleX(0.8961);">2025.06.16 09:58:22.819</span>
<span class="t m" style="left:183.50px;top:613.57px;font-size:11px;letter-spacing:0.3988px;white-space:pre;">2025.01.10 15:29:20   Prev value: 227.00000 K &gt;&gt; Forecast Value: 213.00000 K &gt;&gt; News Impact = CALENDAR_IMPACT_NA &gt;&gt; Unit = CALENDAR_UNIT_JOB &gt;&gt; Country ID = 840</span>
<div class="r" style="left:27.7px;top:635.7px;width:3.6px;height:3.6px;background:#a0a0a0;border-radius:50%;"></div>
<span class="t" style="left:41.50px;top:631.84px;font-size:12px;transform:scaleX(0.8961);">2025.06.16 09:58:22.819</span>
<span class="t m" style="left:183.50px;top:633.57px;font-size:11px;letter-spacing:0.3988px;white-space:pre;">2025.01.10 15:29:20   [INFO] CiCalendarEconomic::RevisedInformation | Event name: Average Hourly Earnings m/m &gt;&gt; Actual value: no defined</span>
<div class="r" style="left:27.7px;top:655.7px;width:3.6px;height:3.6px;background:#a0a0a0;border-radius:50%;"></div>
<span class="t" style="left:41.50px;top:651.84px;font-size:12px;transform:scaleX(0.8961);">2025.06.16 09:58:22.819</span>
<span class="t m" style="left:183.50px;top:653.57px;font-size:11px;letter-spacing:0.3988px;white-space:pre;">2025.01.10 15:29:20   Prev value: 0.40000  &gt;&gt; Forecast Value: 0.00000  &gt;&gt; News Impact = CALENDAR_IMPACT_NA &gt;&gt; Unit = CALENDAR_UNIT_PERCENT &gt;&gt; Country ID = 840</span>
<div class="r" style="left:27.7px;top:675.7px;width:3.6px;height:3.6px;background:#a0a0a0;border-radius:50%;"></div>
<span class="t" style="left:41.50px;top:671.84px;font-size:12px;transform:scaleX(0.8961);">2025.06.16 09:58:22.983</span>
<span class="t m" style="left:183.50px;top:673.57px;font-size:11px;letter-spacing:0.3988px;white-space:pre;">2025.01.10 20:20:00   Alert: The bullish order block is being mitigated: 2025.01.10 18:25</span>
<svg class="r" style="left:2px;top:670px" width="16" height="56" viewBox="2 670 16 56"><text transform="translate(15,720.4) rotate(-90)" font-size="12" font-family="Liberation Sans, sans-serif" textLength="38.5" lengthAdjust="spacingAndGlyphs" fill="#000">Toolbox</text></svg>
<span class="t" style="left:35.00px;top:704.84px;font-size:12px;color:#7a7a7a;transform:scaleX(0.8930);">Trade</span>
<div class="r" style="left:73px;top:705px;width:1px;height:14px;background:#7a7a7a;"></div>
<span class="t" style="left:83.00px;top:704.84px;font-size:12px;color:#7a7a7a;transform:scaleX(1.0122);">History</span>
<div class="r" style="left:131px;top:705px;width:1px;height:14px;background:#7a7a7a;"></div>
<span class="t" style="left:141.70px;top:704.84px;font-size:12px;color:#7a7a7a;transform:scaleX(0.9710);">Operations</span>
<div class="r" style="left:209px;top:701px;width:58px;height:20px;background:#fff;box-sizing:border-box;border:1px solid #000;border-top:none;box-shadow:1px 1px 0 #c8c8c8;"></div>
<span class="t" style="left:219.00px;top:704.84px;font-size:12px;transform:scaleX(0.9528);">Journal</span>
<div class="r" style="left:1364px;top:25px;width:2px;height:703px;background:#f0f0f0;"></div>
<div class="r" style="left:1364px;top:25px;width:1px;height:703px;background:#8a8a8a;"></div>
<div class="r" style="left:0px;top:728px;width:1366px;height:40px;background:#101010;"></div>
<div class="r" style="left:48px;top:728px;width:344px;height:40px;background:#3b3b3b;box-sizing:border-box;border:1px solid #5a5a5a;border-left:none"></div>
<div class="r" style="left:692px;top:728px;width:41px;height:40px;background:#2b2b2b;"></div>
<div class="r" style="left:692px;top:728px;width:2px;height:38px;background:#3d7a3d;"></div>
<div class="r" style="left:786px;top:728px;width:48px;height:40px;background:#333333;"></div>
<div class="r" style="left:594px;top:766px;width:40px;height:2px;background:#a5a5a5;"></div>
<div class="r" style="left:643px;top:766px;width:40px;height:2px;background:#a5a5a5;"></div>
<div class="r" style="left:692px;top:766px;width:41px;height:2px;background:#4bd34b;"></div>
<div class="r" style="left:741px;top:766px;width:40px;height:2px;background:#a5a5a5;"></div>
<div class="r" style="left:786px;top:766px;width:48px;height:2px;background:#a5a5a5;"></div>
<svg class="r" style="left:0;top:728px" width="1366" height="40" viewBox="0 728 1366 40" fill="none">
<!-- windows logo -->
<path d="M15.8 742.5l6.7-.9v6.3h-6.7zM23.4 741.5l8.8-1.3v7.7h-8.8zM15.8 748.8h6.7v6.3l-6.7-.9zM23.4 748.8h8.8v7.7l-8.8-1.3z" fill="#fff"/>
<!-- search icon -->
<circle cx="70.7" cy="746.4" r="4.6" stroke="#e6e6e6" stroke-width="1.3"/><path d="M67.4 749.8l-7 6" stroke="#e6e6e6" stroke-width="1.3"/>
<!-- turtle scene -->
<defs><linearGradient id="sh" x1="0" y1="0" x2="1" y2="1"><stop offset="0" stop-color="#a6d23a"/><stop offset="0.6" stop-color="#7cbc34"/><stop offset="1" stop-color="#9ccc2e"/></linearGradient>
<linearGradient id="sd" x1="0" y1="0" x2="0" y2="1"><stop offset="0" stop-color="#f7e2a8"/><stop offset="1" stop-color="#e6b878"/></linearGradient>
<clipPath id="sb"><rect x="48" y="729" width="343" height="39"/></clipPath></defs>
<g clip-path="url(#sb)">
<path d="M312 768c6-5 22-8 40-8s34 3 40 8z" fill="url(#sd)"/>
<ellipse cx="352" cy="768" rx="20" ry="3.500" fill="#dba978"/>
<path d="M320.500 762.500c.5-3 2.500-4.500 5-4.500s4.500 1.500 5 4.500c-3 1.200-7 1.200-10 0z" fill="#ee5cc0"/>
<path d="M368.500 762c.6-3.600 3-5.600 6.200-5.600s5.400 2 6 5.200c-4 1.600-8.200 1.600-12.200.4z" fill="#a870e4"/>
<path d="M381 762l-6-10 5 6 .500-9.500 2.500 9 3.500-6.500-2.500 11z" fill="#40c890"/>
<path d="M332 749.500c1 3 .5 7 2.500 10l3 .8c1-4 .5-8-1-11.500z" fill="#4ab84a"/>
<path d="M338 741.500c5 8 14 11 24 11 6-.5 10-2 12-4l-16-6z" fill="#eeaa5c"/>
<path d="M348 747c-1 4 1 8 4 11 3 3 7 5 12 5.500 1.500-1 1.500-2.500.5-4-3-4.500-6-9-9.500-13z" fill="#2fa24c"/>
<path d="M349 747c2 5 6 10 12 15" stroke="#67c23e" stroke-width="1" fill="none"/>
<path d="M336.500 740.500c3-6 10-10.500 19-10.500 10 0 19 5 23 12.500.5 1.500-.5 3-2.500 4-5 2.500-13 2.500-20 1-7-1.500-15-4-19.500-7z" fill="url(#sh)"/>
<path d="M342 739c6-5 14-7 22-5.500M352 731.500c2 5 3 10 3.500 16M362 732c3 4 6 9 8 14" stroke="#b9de52" stroke-width="0.800" fill="none" opacity="0.800"/>
<path d="M340 741.500c6 3.500 20 7 34 5.500" stroke="#c4d832" stroke-width="1.200" fill="none"/>
<path d="M375.500 743c3.500-2.500 8.500-1 10.500 2-2.500 3-7.500 3.500-11 1.500z" fill="#33a64a"/>
<path d="M325.500 746c0-3.500 4-5.500 8-5.500 2.500 0 4.500 1.500 4.500 4s-2 5.500-6 6c-4 .5-6.500-1.500-6.500-4.500z" fill="#94cc3e"/>
<path d="M329 745c1.500-1.500 5-1.500 6.500 0-1 2-5 2.500-6.500 0z" fill="#3c9e44"/>
<circle cx="332.200" cy="744.800" r="0.900" fill="#4a2268"/>
<circle cx="330.600" cy="731.300" r="1.900" fill="#35b6e8"/><circle cx="329.600" cy="737.800" r="1.400" fill="#35b6e8"/><rect x="331" y="735" width="2" height="1" fill="#6cc8ee"/>
</g>
<!-- task view -->
<g stroke="#fff" stroke-width="1.200"><path d="M408.400 743v-2.600h10.400v2.600M408.400 753v2.400h10.400v-2.400"/><rect x="408.400" y="744.300" width="10.400" height="7.400"/><path d="M422.500 739.900v3.600M422.500 748v7.400"/></g><rect x="421" y="744" width="3.200" height="3.400" fill="#fff"/>
<!-- calculator -->
<rect x="458.5" y="736" width="17.5" height="24" rx="1.5" fill="#6d7f98" stroke="#8a9bb2" stroke-width="0.8"/>
<rect x="460.6" y="738" width="13.3" height="4" fill="#4cc2f0"/>
<g fill="#dfe6ee"><rect x="460.6" y="744" width="3.4" height="3.4"/><rect x="465.5" y="744" width="3.4" height="3.4"/><rect x="470.4" y="744" width="3.4" height="3.4"/>
<rect x="460.6" y="749" width="3.4" height="3.4"/><rect x="465.5" y="749" width="3.4" height="3.4"/>
<rect x="460.6" y="754" width="3.4" height="3.4"/><rect x="465.5" y="754" width="3.4" height="3.4"/></g>
<rect x="470.4" y="749" width="3.4" height="8.4" fill="#0f4a96"/>
<!-- orange app -->
<path d="M505.5 741h13l2-1.5h5.5v17h-20.5z" fill="#f2f2f2"/>
<circle cx="512.8" cy="749" r="3.6" fill="#f07a28"/><rect x="519.7" y="744.5" width="2.6" height="9" fill="#f07a28"/><circle cx="516.8" cy="744" r="0.9" fill="#f07a28"/>
<!-- snip app -->
<rect x="553" y="736" width="12" height="12" fill="#7cc0f2"/><rect x="565" y="736" width="12" height="12" fill="#a6dca0"/>
<rect x="553" y="748" width="12" height="12" fill="#fbe0b0"/><rect x="565" y="748" width="12" height="12" fill="#d8d8d8"/>
<circle cx="559" cy="754" r="4" fill="#fdebc8"/><circle cx="571" cy="742" r="4" fill="#bfe6b8"/>
<path d="M554 737l10 10" stroke="#c8384a" stroke-width="2.4"/><circle cx="564.8" cy="747.8" r="3" fill="#e8202a"/>
<path d="M566.5 748.5v10l2.4-2.2 1.8 3.6 1.6-.8-1.8-3.4h3.2z" fill="#fff" stroke="#222" stroke-width="0.7"/>
<!-- explorer -->
<path d="M603 739.5h8l1.5 1.8h12v3h-21.5z" fill="#e8a800"/>
<rect x="603" y="742.2" width="21.5" height="14.4" rx="0.8" fill="#ffd765"/>
<path d="M607.8 750h12v6.6h-3v-3.2h-6v3.2h-3z" fill="#2f8ddc"/>
<!-- chrome -->
<circle cx="663" cy="748" r="12" fill="#e03a2e"/>
<path d="M663 748L652.6 742A12 12 0 0 0 663 760z" fill="#28a043"/>
<path d="M663 748L663 760A12 12 0 0 0 673.4 742z" fill="#fbc116"/>
<path d="M663 748L652.6 742A12 12 0 0 1 673.4 742z" fill="#e03a2e"/>
<circle cx="663" cy="748" r="5.6" fill="#fff"/><circle cx="663" cy="748" r="4.4" fill="#3f86f0"/>
<!-- MT5 -->
<circle cx="712" cy="741.500" r="5" fill="#5aa646"/><circle cx="705" cy="752" r="4.8" fill="#d8c23a"/><circle cx="719.5" cy="752" r="4.8" fill="#2f7fc4"/>
<circle cx="709" cy="754.5" r="3.5" fill="#b8a82e"/><circle cx="716" cy="754.5" r="3.5" fill="#2a6cb0"/>
<circle cx="712" cy="749.800" r="5.600" fill="#fff" stroke="#c9962c" stroke-width="0.8"/>
<!-- meta editor -->
<path d="M752.5 741l11-5v24l-11-3.2z" fill="#c8921a"/><path d="M763.5 739.5h7v15h-7z" fill="#f4c020"/><path d="M763.5 754.5h7l-7 5.5z" fill="#e0a818"/>
<!-- tester chip -->
<g stroke="#1b78c4" stroke-width="1.1"><path d="M805.5 738v4M808.5 738v4M811.500 738v4M814.5 738v4M805.5 755v4M808.5 755v4M811.5 755v4M814.5 755v4M800 743.5h4M800 746.5h4M800 749.5h4M800 752.5h4M816 743.5h4M816 746.5h4M816 749.5h4M816 752.5h4"/></g>
<rect x="803" y="741" width="14" height="14" rx="1.5" fill="#bfe3fb" stroke="#1b78c4" stroke-width="1.6"/>
<!-- tray: shield -->
<path d="M1098.5 741c2 1.4 4.6 2 6.8 2v4.5c0 3.6-3 6-6.800 7-3.8-1-6.800-3.400-6.800-7V743c2.200 0 4.800-.6 6.800-2z" fill="#fff"/>
<path d="M1098.500 741.500v13M1092 747.500h13" stroke="#101010" stroke-width="1"/>
<path d="M1102.600 747.200l4.400 8.600h-8.800z" fill="#f7c81e"/><rect x="1102.200" y="750" width="0.9" height="3" fill="#101010"/><rect x="1102.200" y="753.800" width="0.900" height="0.900" fill="#101010"/>
<!-- bluetooth -->
<ellipse cx="1123.200" cy="747.800" rx="6" ry="8.200" fill="#0a84ff"/>
<path d="M1120.400 744.800l5.400 5.400-2.700 2.600v-10l2.700 2.600-5.400 5.400" stroke="#fff" stroke-width="1"/>
<!-- battery -->
<g stroke="#fff" stroke-width="1.200"><rect x="1143.500" y="744.500" width="10.500" height="8"/><path d="M1154.600 747v3.200M1139.500 742v2.500M1142.300 742v2.500M1138.600 744.800h4.600v1.800c0 1.500-1 2.300-2.300 2.300s-2.300-.8-2.300-2.300zM1140.900 749v3.400h2.600"/></g>
<rect x="1145" y="746" width="7.500" height="5" fill="#fff"/>
<!-- wifi -->
<g stroke="#fff" stroke-width="1.200"><path d="M1166.500 755a11.500 11.500 0 0 1 11.500-11.500M1169.800 755a8.200 8.200 0 0 1 8.200-8.200M1173 755a5 5 0 0 1 5-5"/></g><circle cx="1176.500" cy="753.600" r="1.500" fill="#fff"/>
<!-- volume -->
<path d="M1187.600 745.400h2.600l3.600-3.400v11.600l-3.600-3.400h-2.600z" stroke="#fff" stroke-width="1.100"/>
<path d="M1196 745.200a3.600 3.600 0 0 1 0 5.200" stroke="#fff" stroke-width="1"/><path d="M1198.400 743.200a6.400 6.400 0 0 1 0 9.200" stroke="#9a9a9a" stroke-width="1"/><path d="M1200.800 741.400a9 9 0 0 1 0 12.800" stroke="#5a5a5a" stroke-width="1"/>
<!-- notification -->
<path d="M1325.500 740.500h15v11h-4v3.500l-3.500-3.500h-7.500z" fill="#fff"/>
<path d="M1328 743.500h10M1328 746h10M1328 748.500h10" stroke="#101010" stroke-width="1"/>
<circle cx="1340.600" cy="755.200" r="7.700" fill="#3c3c3c" stroke="#6a6a6a" stroke-width="1"/>
</svg>

<span class="t" style="left:88.30px;top:741.30px;font-size:15px;color:#e6e6e6;transform:scaleX(0.9553);">Escribe aquí para buscar.</span>
<span class="t" style="left:1215.70px;top:741.84px;font-size:12px;color:#fff;transform:scaleX(0.7287);">ESP</span>
<span class="t" style="left:1263.70px;top:733.04px;font-size:12px;color:#fff;transform:scaleX(0.9091);">09:59</span>
<span class="t" style="left:1249.40px;top:751.14px;font-size:12px;color:#fff;transform:scaleX(0.9490);">16/06/2025</span>
<span class="t" style="left:1338.20px;top:750.19px;font-size:11px;color:#fff;">1</span>
<span class="t" style="left:709.30px;top:744.71px;font-size:10.5px;color:#c9962c;font-weight:bold;">5</span>
<span class="t" style="left:755.20px;top:740.84px;font-size:12px;color:#fff;font-weight:bold;transform:skewY(12deg);">5</span>
</body></html>
